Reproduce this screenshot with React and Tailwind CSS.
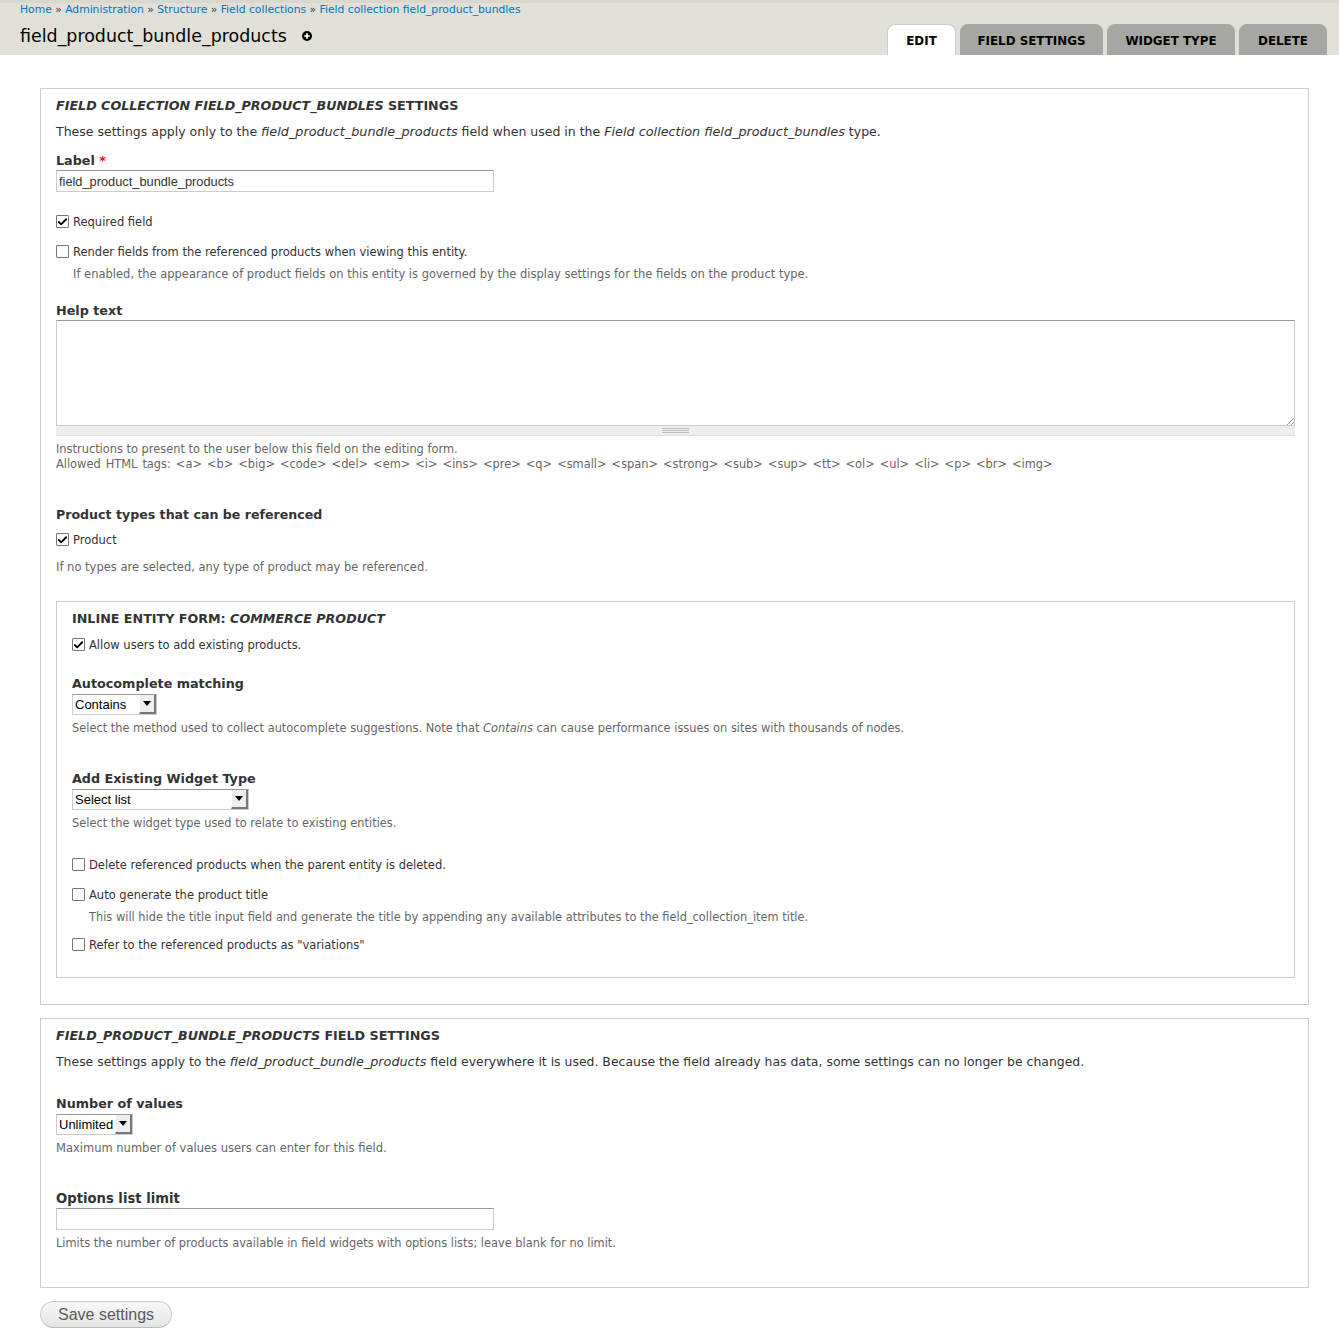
import { Check } from 'lucide-react';

const Crumb = ({ children }) => <a className="text-[#0074bd]">{children}</a>;
const Sep = () => <span className="text-[#333]"> » </span>;

const Tab = ({ active, width, children }) => (
  <div
    className={
      active
        ? `${width} h-[31px] pt-[3px] rounded-t-lg bg-white border-x border-t border-[#ccc] flex items-center justify-center text-black text-[11.9px] font-bold uppercase`
        : `${width} h-[31px] pt-[4px] rounded-t-lg bg-[#a6a7a2] flex items-center justify-center text-black text-[11.9px] font-bold uppercase`
    }
  >
    {children}
  </div>
);

const Legend = ({ children }) => (
  <div className="h-4 leading-4 text-[12.7px] font-bold uppercase text-[#333]">{children}</div>
);

const FieldLabel = ({ size = 'text-[12.75px]', children }) => (
  <div className={`h-4 leading-4 ${size} font-bold text-[#333]`}>{children}</div>
);

const Desc = ({ size = 'text-[11.4px]', children, className = '' }) => (
  <div className={`h-[15px] leading-[17px] ${size} text-[#666] ${className}`}>{children}</div>
);

const Checkbox = ({ checked, children }) => (
  <div className="h-[15px] flex items-center gap-[4px] text-[11.5px] text-[#333]">
    <span className="w-[13px] h-[13px] border border-[#767676] rounded-[1px] bg-white flex items-center justify-center">
      {checked && <Check size={12} strokeWidth={4} className="text-black" />}
    </span>
    <span className="pt-[2px]">{children}</span>
  </div>
);

const TextBox = ({ value }) => (
  <div className="w-[438px] h-[22px] border border-[#ccc] border-t-[#999] bg-white px-[2px] leading-[21px] text-[12.8px] text-[#333] font-['Liberation_Sans',sans-serif]">
    {value}
  </div>
);

const Select = ({ width, children }) => (
  <div
    className={`${width} h-[21px] border border-[#ccc] border-t-[#999] bg-white flex items-center justify-between pl-[2px] text-[13px] text-black font-['Liberation_Sans',sans-serif]`}
  >
    <span>{children}</span>
    <span className="w-[17px] h-[19px] bg-[#eee] border-r-2 border-b-2 border-[#777] border-l border-l-white flex items-center justify-center">
      <svg width="8" height="5" viewBox="0 0 8 5">
        <path d="M0 0h8L4 5z" fill="#000" />
      </svg>
    </span>
  </div>
);

export default function App() {
  return (
    <div className="w-[1339px] h-[1339px] overflow-hidden bg-white font-['DejaVu_Sans',sans-serif] text-[#333]">
      <header className="h-[55px] bg-[#e0e0d8] border-t-[3px] border-[#d8d8d0] flex justify-between pl-5 pr-3">
        <div>
          <div className="mt-px h-3 leading-3 text-[10.76px] whitespace-pre">
            <Crumb>Home</Crumb>
            <Sep />
            <Crumb>Administration</Crumb>
            <Sep />
            <Crumb>Structure</Crumb>
            <Sep />
            <Crumb>Field collections</Crumb>
            <Sep />
            <Crumb>Field collection field_product_bundles</Crumb>
          </div>
          <div className="mt-2 flex items-center gap-[15px] text-black text-[17.45px] leading-6">
            <span>field_product_bundle_products</span>
            <svg width="10" height="10" viewBox="0 0 10 10">
              <circle cx="5" cy="5" r="5" fill="#000" />
              <path d="M5 2.2v5.6M2.2 5h5.6" stroke="#fff" strokeWidth="1.7" />
            </svg>
          </div>
        </div>
        <nav className="flex items-end gap-[4px]">
          <Tab active width="w-[69px]">Edit</Tab>
          <Tab width="w-[143px]">Field settings</Tab>
          <Tab width="w-[128px]">Widget type</Tab>
          <Tab width="w-[88px]">Delete</Tab>
        </nav>
      </header>

      <main className="pl-10 pr-[30px] pt-[33px]">
        <section className="h-[917px] border border-[#ccc] pl-[15px] pr-[13px] pt-[9px]">
          <Legend>
            <em>Field collection field_product_bundles</em> settings
          </Legend>
          <p className="mt-[10px] h-4 leading-4 text-[12.5px]">
            These settings apply only to the <em className="text-[12.8px]">field_product_bundle_products</em> field when used in the{' '}
            <em className="text-[12.8px]">Field collection field_product_bundles</em> type.
          </p>
          <div className="mt-[13px]">
            <FieldLabel>
              Label <span className="text-[#f00]">*</span>
            </FieldLabel>
          </div>
          <div className="mt-px">
            <TextBox value="field_product_bundle_products" />
          </div>
          <div className="mt-[22px]">
            <Checkbox checked>Required field</Checkbox>
          </div>
          <div className="mt-[15px]">
            <Checkbox>Render fields from the referenced products when viewing this entity.</Checkbox>
          </div>
          <Desc size="text-[11.5px]" className="mt-[7px] pl-[17px]">
            If enabled, the appearance of product fields on this entity is governed by the display settings for the fields on the product type.
          </Desc>
          <div className="mt-[22px]">
            <FieldLabel>Help text</FieldLabel>
          </div>
          <div className="relative mt-px h-[106px] border border-[#ccc] border-t-[#999] bg-white">
            <svg width="8" height="8" viewBox="0 0 8 8" className="absolute right-0 bottom-0">
              <path d="M1 8l7-7M5 8l3-3" stroke="#999" strokeWidth="1" />
            </svg>
          </div>
          <div className="h-[10px] bg-[#eee] border-b border-[#ddd] flex justify-center pt-[2px]">
            <div className="w-[27px] h-[5px] border-y border-[#bbb] flex items-center">
              <div className="w-full h-px bg-[#bbb]" />
            </div>
          </div>
          <Desc className="mt-[5px]">Instructions to present to the user below this field on the editing form.</Desc>
          <Desc className="[word-spacing:1.4px]">
            Allowed HTML tags: &lt;a&gt; &lt;b&gt; &lt;big&gt; &lt;code&gt; &lt;del&gt; &lt;em&gt; &lt;i&gt; &lt;ins&gt; &lt;pre&gt; &lt;q&gt; &lt;small&gt; &lt;span&gt; &lt;strong&gt; &lt;sub&gt; &lt;sup&gt; &lt;tt&gt; &lt;ol&gt; &lt;ul&gt; &lt;li&gt; &lt;p&gt; &lt;br&gt; &lt;img&gt;
          </Desc>
          <div className="mt-[36px]">
            <FieldLabel size="text-[12.6px]">Product types that can be referenced</FieldLabel>
          </div>
          <div className="mt-[9px]">
            <Checkbox checked>Product</Checkbox>
          </div>
          <Desc size="text-[11.5px]" className="mt-[12px]">If no types are selected, any type of product may be referenced.</Desc>

          <section className="mt-[27px] h-[377px] border border-[#ccc] px-[15px] pt-[9px]">
            <Legend>
              Inline Entity Form: <em>Commerce Product</em>
            </Legend>
            <div className="mt-[10px]">
              <Checkbox checked>Allow users to add existing products.</Checkbox>
            </div>
            <div className="mt-[24px]">
              <FieldLabel>Autocomplete matching</FieldLabel>
            </div>
            <div className="mt-[2px]">
              <Select width="w-[85px]">Contains</Select>
            </div>
            <Desc className="mt-[5px]">
              Select the method used to collect autocomplete suggestions. Note that <em>Contains</em> can cause performance issues on sites with thousands of nodes.
            </Desc>
            <div className="mt-[36px]">
              <FieldLabel>Add Existing Widget Type</FieldLabel>
            </div>
            <div className="mt-[2px]">
              <Select width="w-[177px]">Select list</Select>
            </div>
            <Desc className="mt-[5px]">Select the widget type used to relate to existing entities.</Desc>
            <div className="mt-[27px]">
              <Checkbox>Delete referenced products when the parent entity is deleted.</Checkbox>
            </div>
            <div className="mt-[15px]">
              <Checkbox>Auto generate the product title</Checkbox>
            </div>
            <Desc className="mt-[7px] pl-[17px]">
              This will hide the title input field and generate the title by appending any available attributes to the field_collection_item title.
            </Desc>
            <div className="mt-[13px]">
              <Checkbox>Refer to the referenced products as "variations"</Checkbox>
            </div>
          </section>
        </section>

        <section className="mt-[13px] h-[270px] border border-[#ccc] pl-[15px] pr-[13px] pt-[9px]">
          <Legend>
            <em>field_product_bundle_products</em> field settings
          </Legend>
          <p className="mt-[10px] h-4 leading-4 text-[12.44px]">
            These settings apply to the <em className="text-[12.8px]">field_product_bundle_products</em> field everywhere it is used. Because the field already has data, some settings can no longer be changed.
          </p>
          <div className="mt-[26px]">
            <FieldLabel>Number of values</FieldLabel>
          </div>
          <div className="mt-[2px]">
            <Select width="w-[77px]">Unlimited</Select>
          </div>
          <Desc size="text-[11.5px]" className="mt-[5px]">Maximum number of values users can enter for this field.</Desc>
          <div className="mt-[36px]">
            <FieldLabel size="text-[13.2px]">Options list limit</FieldLabel>
          </div>
          <div className="mt-px">
            <TextBox />
          </div>
          <Desc size="text-[11.4px]" className="mt-[5px]">Limits the number of products available in field widgets with options lists; leave blank for no limit.</Desc>
        </section>

        <button className="mt-[13px] w-[132px] h-[27px] pt-px rounded-[14px] border border-[#ccc] border-b-[#bbb] bg-gradient-to-b from-[#f8f8f8] to-[#e4e4e4] text-[16px] leading-none text-[#5a5a5a] font-['Liberation_Sans',sans-serif]">
          Save settings
        </button>
      </main>
    </div>
  );
}
